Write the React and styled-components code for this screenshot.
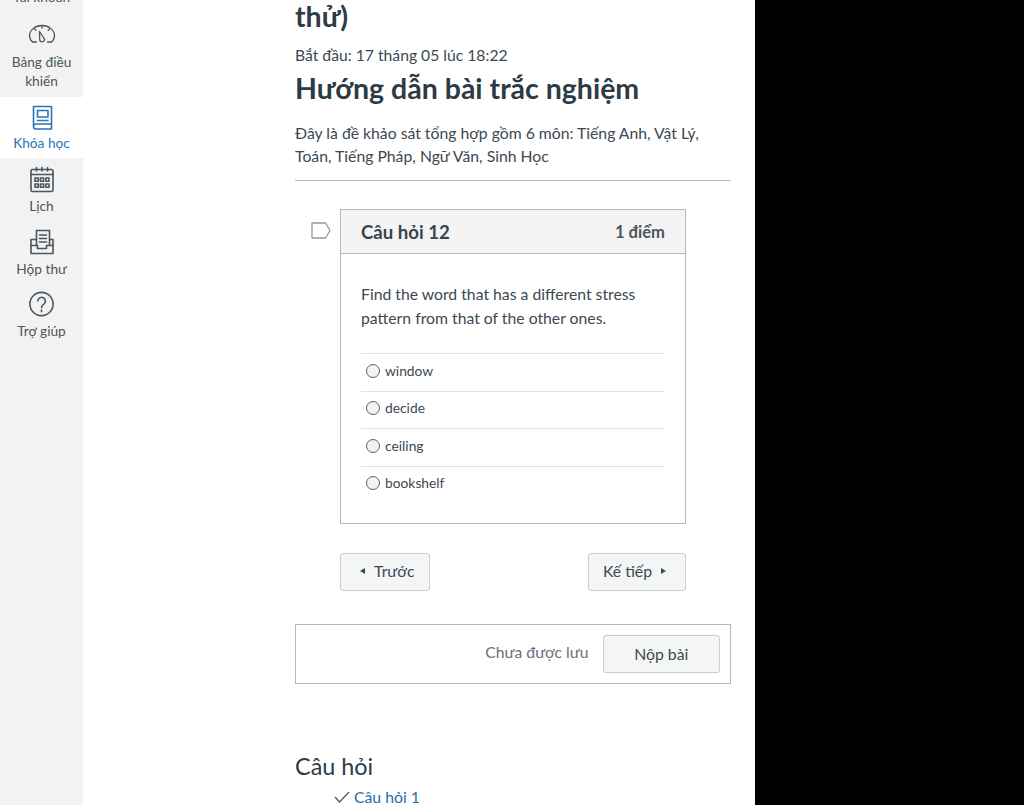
import React from 'react'
import styled, { createGlobalStyle } from 'styled-components'

const GlobalStyle = createGlobalStyle`
  html, body { margin: 0; padding: 0; height: 805px; overflow: hidden; background: #000; }
  body { font-family: Lato, "Noto Sans", sans-serif; color: #2d3b45; }
`

const Page = styled.div`
  display: flex;
  width: 755px;
  height: 805px;
  overflow: hidden;
  background: #fff;
`

const Sidebar = styled.nav`
  flex: 0 0 83px;
  background: #f2f2f2;
  display: flex;
  flex-direction: column;
  margin-top: -14px;
`

const NavItem = styled.div`
  display: flex;
  flex-direction: column;
  align-items: center;
  text-align: center;
  padding-top: ${p => p.$top || 0}px;
  padding-bottom: ${p => p.$bottom || 0}px;
  font-size: 13.7px;
  line-height: 19px;
  background: ${p => (p.$active ? '#fff' : 'transparent')};
  color: ${p => (p.$active ? '#2a75b5' : '#4a5660')};
`

const NavIcon = styled.svg`
  width: 30px;
  height: 30px;
  margin-bottom: ${p => p.$gap ?? 2}px;
  fill: none;
  stroke: currentColor;
  stroke-width: ${p => p.$stroke || 1.6};
  stroke-linejoin: round;
  stroke-linecap: round;
`

const Main = styled.main`
  flex: 1;
  padding: 0 24px 0 212px;
  margin-top: -2px;
`

const Title = styled.h1`
  margin: 0;
  font-size: 28.5px;
  line-height: 36px;
  font-weight: 700;
  color: #2d3b45;
`

const Started = styled.div`
  margin-top: 9px;
  font-size: 15.7px;
  line-height: 24px;
  color: #3c4852;
`

const Heading = styled.h2`
  margin: 0;
  font-size: 28.5px;
  line-height: 42px;
  font-weight: 700;
  color: #2d3b45;
`

const Intro = styled.p`
  margin: 11.5px 0 0;
  font-size: 15.75px;
  line-height: 23.5px;
  color: #3c4852;
  padding-bottom: 12px;
  border-bottom: 1px solid #b6bcc1;
`

const QuestionRow = styled.div`
  margin: 28.5px 0 0 45px;
  width: 346px;
  position: relative;
`

const Flag = styled.svg`
  position: absolute;
  left: -29px;
  top: 13px;
  width: 20px;
  height: 17px;
  fill: none;
  stroke: #8d9aa8;
  stroke-width: 1.3;
  stroke-linejoin: round;
`

const Card = styled.section`
  border: 1px solid #b4b9bd;
`

const CardHead = styled.header`
  display: flex;
  justify-content: space-between;
  align-items: center;
  height: 43px;
  padding: 0 20px;
  background: #f4f4f4;
  border-bottom: 1px solid #b4b9bd;
`

const QTitle = styled.span`
  font-size: 18.6px;
  font-weight: 700;
  color: #3a444c;
`

const Points = styled.span`
  font-size: 16.6px;
  font-weight: 700;
  color: #4a5660;
`

const CardBody = styled.div`
  padding: 28px 20px 20px;
`

const QText = styled.p`
  margin: 0 0 24px;
  font-size: 15.75px;
  line-height: 23.5px;
  color: #3c4852;
`

const Answer = styled.label`
  display: flex;
  align-items: center;
  gap: 5px;
  height: 32.5px;
  padding-bottom: 4px;
  border-top: 1px solid #dfe1e3;
  font-size: 13.8px;
  color: #3c4852;
`

const Radio = styled.span`
  width: 12px;
  height: 12px;
  margin-left: 5px;
  margin-top: 1px;
  border-radius: 50%;
  border: 1px solid #596269;
  background: #f2f2f2;
`

const NavRow = styled.div`
  display: flex;
  justify-content: space-between;
  margin: 29px 0 0 45px;
  width: 346px;
`

const Button = styled.button`
  display: inline-flex;
  align-items: center;
  justify-content: center;
  gap: 9px;
  box-sizing: border-box;
  height: 37.5px;
  width: ${p => p.$width}px;
  padding: 0 0 2px;
  font-family: inherit;
  font-size: 15.75px;
  color: #3c4852;
  background: #f4f5f5;
  border: 1px solid #c7cdd1;
  border-radius: 3px;
`

const Arrow = styled.span`
  width: 0;
  height: 0;
  margin-top: 1px;
  border-top: 3.5px solid transparent;
  border-bottom: 3.5px solid transparent;
  ${p => (p.$left
    ? 'border-right: 5px solid #3c4852; margin-left: 5px;'
    : 'border-left: 5px solid #3c4852; margin-right: 5px;')}
`

const SubmitBar = styled.div`
  margin-top: 33.5px;
  height: 58px;
  display: flex;
  align-items: center;
  justify-content: flex-end;
  gap: 14px;
  padding-right: 10px;
  border: 1px solid #b4b9bd;
`

const Unsaved = styled.span`
  font-size: 15.7px;
  color: #66717a;
  margin-top: -4px;
`

const SideHeading = styled.h3`
  margin: 65px 0 0;
  font-size: 23.4px;
  line-height: 34px;
  font-weight: 400;
  color: #2d3b45;
`

const QuestionLink = styled.div`
  display: flex;
  align-items: center;
  gap: 4px;
  margin: 2px 0 0 39px;
  font-size: 15.75px;
  line-height: 24px;
  color: #2a6ca8;
`

const Check = styled.svg`
  width: 16px;
  height: 12px;
  fill: none;
  stroke: #4a5660;
  stroke-width: 1.2;
`

const answers = ['window', 'decide', 'ceiling', 'bookshelf']

const App = () => {
  return (
    <>
      <GlobalStyle />
      <Page>
        <Sidebar>
          <NavItem $top={1}>Tài khoản</NavItem>
          <NavItem $top={14} $bottom={6.5}>
            <NavIcon viewBox="0 0 30 30" $stroke={1.3}>
              <path d="M9.500 22H5.500C3.300 20 2.500 18 2.500 15.500 2.500 10.500 8 5.500 15 5.500S27.500 10.500 27.500 15.500c0 2.500-.8 4.500-3 6.500H20.500" />
              <path d="M12.500 11.500l4 6a2.400 2.400 0 1 1-3.800 2.300z" />
              <path d="M15 5.500v2.500M7.500 9l1.300 1.400M22.500 9l-1.300 1.400" />
            </NavIcon>
            Bảng điều<br />khiển
          </NavItem>
          <NavItem $active $top={5} $bottom={6.5}>
            <NavIcon viewBox="0 0 30 30" $gap={1}>
              <path d="M6.500 24V4.500h18V22H9a2.500 2.500 0 0 0 0 5h15.500v-5" />
              <rect x="10.500" y="8.500" width="10.500" height="6.500" />
              <path d="M10.500 18.500h10.500" />
            </NavIcon>
            Khóa học
          </NavItem>
          <NavItem $top={6}>
            <NavIcon viewBox="0 0 30 30" $gap={1.5}>
              <rect x="4" y="5.500" width="22" height="22" rx="1.500" />
              <path d="M4 10.500h22M9.500 3.500v3.500M15 3.500v3.500M20.500 3.500v3.500" />
              <path d="M8 14h3.200v3.200H8zM13.400 14h3.200v3.200h-3.200zM18.800 14H22v3.200h-3.200zM8 20h3.200v3.200H8zM13.400 20h3.200v3.200h-3.200zM18.800 20H22v3.200h-3.200z" />
            </NavIcon>
            Lịch
          </NavItem>
          <NavItem $top={12.5}>
            <NavIcon viewBox="0 0 30 30">
              <path d="M9.500 18V3.500h13V18" />
              <path d="M12.500 8h7M12.500 11.500h7M12.500 15h7" />
              <path d="M9.500 12.500H4V26.500h22V12.500h-3.500" />
              <path d="M4 18.500h6.500v3h9v-3H26" />
            </NavIcon>
            Hộp thư
          </NavItem>
          <NavItem $top={10.5}>
            <NavIcon viewBox="0 0 30 30">
              <circle cx="14.500" cy="15" r="11.600" />
              <path d="M10.800 12a3.800 3.800 0 1 1 6 3.200c-1.500 1-2.300 1.800-2.300 3.500" />
              <path d="M14.500 21.300v1.300" />
            </NavIcon>
            Trợ giúp
          </NavItem>
        </Sidebar>
        <Main>
          <Title>thử)</Title>
          <Started>Bắt đầu: 17 tháng 05 lúc 18:22</Started>
          <Heading>Hướng dẫn bài trắc nghiệm</Heading>
          <Intro>Đây là đề khảo sát tổng hợp gồm 6 môn: Tiếng Anh, Vật Lý, Toán, Tiếng Pháp, Ngữ Văn, Sinh Học</Intro>
          <QuestionRow>
            <Flag viewBox="0 0 20 17">
              <path d="M1 1h13.500l4.500 7.500L14.500 16H1z" />
            </Flag>
            <Card>
              <CardHead>
                <QTitle>Câu hỏi 12</QTitle>
                <Points>1 điểm</Points>
              </CardHead>
              <CardBody>
                <QText>Find the word that has a different stress pattern from that of the other ones.</QText>
                {answers.map(a => (
                  <Answer key={a}>
                    <Radio />
                    {a}
                  </Answer>
                ))}
              </CardBody>
            </Card>
          </QuestionRow>
          <NavRow>
            <Button $width={89.5}><Arrow $left />Trước</Button>
            <Button $width={98}>Kế tiếp<Arrow /></Button>
          </NavRow>
          <SubmitBar>
            <Unsaved>Chưa được lưu</Unsaved>
            <Button $width={117.5}>Nộp bài</Button>
          </SubmitBar>
          <SideHeading>Câu hỏi</SideHeading>
          <QuestionLink>
            <Check viewBox="0 0 16 12"><path d="M1 6l4.500 5L15 1" /></Check>
            Câu hỏi 1
          </QuestionLink>
        </Main>
      </Page>
    </>
  )
}

export default App
